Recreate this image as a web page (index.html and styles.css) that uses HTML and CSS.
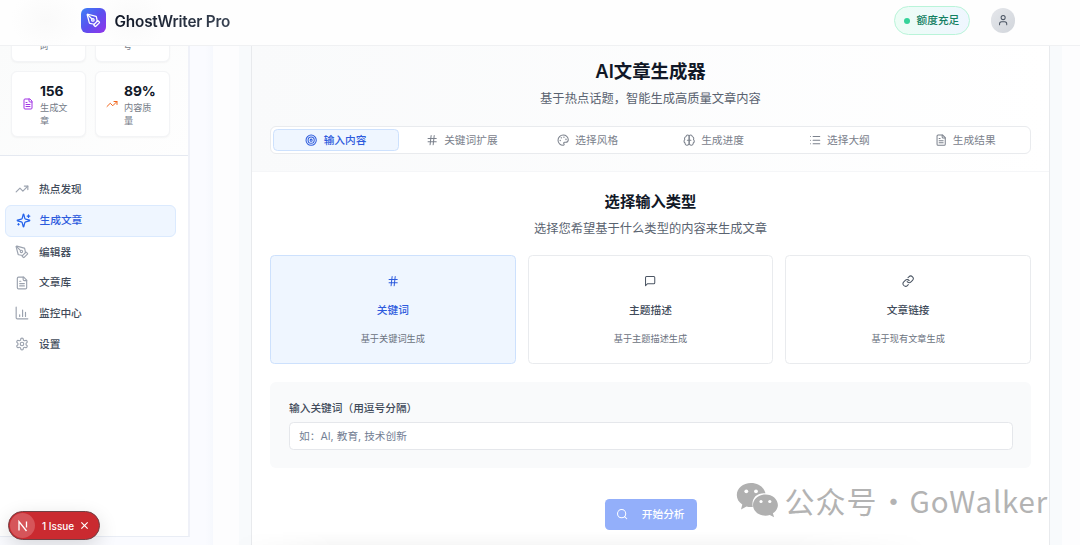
FILE: index.html
```html
<!DOCTYPE html>
<html lang="zh-CN">
<head>
<meta charset="utf-8">
<title>GhostWriter Pro</title>
<link rel="stylesheet" href="styles.css">
</head>
<body>
<svg class="defs" width="0" height="0">
  <symbol id="pen" viewBox="0 0 24 24"><path d="M15.707 21.293a1 1 0 0 1-1.414 0l-1.586-1.586a1 1 0 0 1 0-1.414l5.586-5.586a1 1 0 0 1 1.414 0l1.586 1.586a1 1 0 0 1 0 1.414z"/><path d="m18 13-1.375-6.874a1 1 0 0 0-.746-.776L3.235 2.028a1 1 0 0 0-1.207 1.207L5.35 15.879a1 1 0 0 0 .776.746L13 18"/><path d="m2.3 2.3 7.286 7.286"/><circle cx="11" cy="11" r="2"/></symbol>
  <symbol id="file" viewBox="0 0 24 24"><path d="M15 2H6a2 2 0 0 0-2 2v16a2 2 0 0 0 2 2h12a2 2 0 0 0 2-2V7Z"/><path d="M14 2v4a2 2 0 0 0 2 2h4M10 9H8M16 13H8M16 17H8"/></symbol>
  <symbol id="trend" viewBox="0 0 24 24"><path d="m22 7-8.500 8.500-5-5L2 17"/><path d="M16 7h6v6"/></symbol>
  <symbol id="hash" viewBox="0 0 24 24"><path d="M4 9h16M4 15h16M10 3 8 21M16 3l-2 18"/></symbol>
</svg>
<header class="topbar">
  <div class="brand"><span class="logo"><svg class="icon"><use href="#pen"/></svg></span><span class="brand-name">GhostWriter Pro</span></div>
  <div class="account"><span class="quota"><i class="dot"></i>额度充足</span>
    <span class="avatar"><svg class="icon" viewBox="0 0 24 24"><path d="M19 21v-2a4 4 0 0 0-4-4H9a4 4 0 0 0-4 4v2"/><circle cx="12" cy="7" r="4"/></svg></span></div>
</header>
<div class="layout">
  <aside class="sidebar">
    <section class="stats">
      <div class="stat stat-end"><span class="stat-label">词</span></div>
      <div class="stat stat-end"><span class="stat-label">号</span></div>
      <div class="stat"><svg class="icon purple"><use href="#file"/></svg><div><b>156</b><span class="stat-label">生成文章</span></div></div>
      <div class="stat"><svg class="icon orange"><use href="#trend"/></svg><div><b>89%</b><span class="stat-label">内容质量</span></div></div>
    </section>
    <nav class="nav">
      <a class="nav-item"><svg class="icon"><use href="#trend"/></svg>热点发现</a>
      <a class="nav-item active"><svg class="icon" viewBox="0 0 24 24"><path d="M9.937 15.500A2 2 0 0 0 8.500 14.063l-6.135-1.582a.5.5 0 0 1 0-.962L8.500 9.936A2 2 0 0 0 9.937 8.500l1.582-6.135a.5.5 0 0 1 .963 0L14.063 8.500A2 2 0 0 0 15.500 9.937l6.135 1.581a.5.5 0 0 1 0 .964L15.500 14.063a2 2 0 0 0-1.437 1.437l-1.582 6.135a.5.5 0 0 1-.963 0z"/><path d="M20 3v4M22 5h-4M4 17v2M5 18H3"/></svg>生成文章</a>
      <a class="nav-item"><svg class="icon"><use href="#pen"/></svg>编辑器</a>
      <a class="nav-item"><svg class="icon"><use href="#file"/></svg>文章库</a>
      <a class="nav-item"><svg class="icon" viewBox="0 0 24 24"><path d="M2 2v18a2 2 0 0 0 2 2h18M8 18v-3M13 18V7M18 18v-7"/></svg>监控中心</a>
      <a class="nav-item"><svg class="icon" viewBox="0 0 24 24"><path d="M12.220 2h-.44a2 2 0 0 0-2 2v.18a2 2 0 0 1-1 1.730l-.43.25a2 2 0 0 1-2 0l-.15-.08a2 2 0 0 0-2.730.73l-.22.38a2 2 0 0 0 .73 2.730l.15.1a2 2 0 0 1 1 1.720v.51a2 2 0 0 1-1 1.740l-.15.09a2 2 0 0 0-.73 2.730l.22.38a2 2 0 0 0 2.730.73l.15-.08a2 2 0 0 1 2 0l.43.25a2 2 0 0 1 1 1.730V20a2 2 0 0 0 2 2h.44a2 2 0 0 0 2-2v-.18a2 2 0 0 1 1-1.730l.43-.25a2 2 0 0 1 2 0l.15.08a2 2 0 0 0 2.730-.73l.22-.39a2 2 0 0 0-.73-2.730l-.15-.08a2 2 0 0 1-1-1.740v-.5a2 2 0 0 1 1-1.740l.15-.09a2 2 0 0 0 .73-2.730l-.22-.38a2 2 0 0 0-2.730-.73l-.15.08a2 2 0 0 1-2 0l-.43-.25a2 2 0 0 1-1-1.730V4a2 2 0 0 0-2-2z"/><circle cx="12" cy="12" r="3"/></svg>设置</a>
    </nav>
  </aside>
  <div class="gutter"></div>
  <main class="content">
    <div class="frame">
      <div class="panel">
        <section class="hero">
          <h1>AI文章生成器</h1>
          <p class="lead">基于热点话题，智能生成高质量文章内容</p>
          <div class="tabs">
            <span class="tab active"><svg class="icon" viewBox="0 0 24 24"><circle cx="12" cy="12" r="10"/><circle cx="12" cy="12" r="6"/><circle cx="12" cy="12" r="2"/></svg>输入内容</span>
            <span class="tab"><svg class="icon"><use href="#hash"/></svg>关键词扩展</span>
            <span class="tab"><svg class="icon" viewBox="0 0 24 24"><path d="M12 22a1 1 0 0 1 0-20 10 9 0 0 1 10 9 5 5 0 0 1-5 5h-2.250a1.750 1.750 0 0 0-1.400 2.800l.3.4a1.750 1.750 0 0 1-1.400 2.800z"/><circle cx="13.500" cy="6.500" r=".5"/><circle cx="17.500" cy="10.500" r=".5"/><circle cx="6.500" cy="12.500" r=".5"/><circle cx="8.500" cy="7.500" r=".5"/></svg>选择风格</span>
            <span class="tab"><svg class="icon" viewBox="0 0 24 24"><path d="M12 5a3 3 0 1 0-5.997.125 4 4 0 0 0-2.526 5.770 4 4 0 0 0 .556 6.588A4 4 0 1 0 12 18Z"/><path d="M12 5a3 3 0 1 1 5.997.125 4 4 0 0 1 2.526 5.770 4 4 0 0 1-.556 6.588A4 4 0 1 1 12 18Z"/><path d="M8.500 12h7"/></svg>生成进度</span>
            <span class="tab"><svg class="icon" viewBox="0 0 24 24"><path d="M3 5h.01M3 12h.01M3 19h.01M8 5h13M8 12h13M8 19h13"/></svg>选择大纲</span>
            <span class="tab"><svg class="icon"><use href="#file"/></svg>生成结果</span>
          </div>
        </section>
        <section class="body">
          <h2>选择输入类型</h2>
          <p class="lead">选择您希望基于什么类型的内容来生成文章</p>
          <div class="types">
            <div class="type active"><svg class="icon"><use href="#hash"/></svg><strong>关键词</strong><small>基于关键词生成</small></div>
            <div class="type"><svg class="icon" viewBox="0 0 24 24"><path d="M21 15a2 2 0 0 1-2 2H7l-4 4V5a2 2 0 0 1 2-2h14a2 2 0 0 1 2 2z"/></svg><strong>主题描述</strong><small>基于主题描述生成</small></div>
            <div class="type"><svg class="icon" viewBox="0 0 24 24"><path d="M10 13a5 5 0 0 0 7.540.54l3-3a5 5 0 0 0-7.070-7.070l-1.720 1.710"/><path d="M14 11a5 5 0 0 0-7.540-.54l-3 3a5 5 0 0 0 7.070 7.070l1.710-1.710"/></svg><strong>文章链接</strong><small>基于现有文章生成</small></div>
          </div>
          <div class="form"><label for="kw">输入关键词（用逗号分隔）</label><input id="kw" class="field" placeholder="如：AI, 教育, 技术创新"></div>
          <button class="submit"><svg class="icon" viewBox="0 0 24 24"><circle cx="11" cy="11" r="8"/><path d="m21 21-4.300-4.300"/></svg>开始分析</button>
        </section>
      </div>
    </div>
  </main>
</div>
<div class="bottom-shade"></div>
<div class="issue"><span class="issue-logo"><svg viewBox="0 0 20 20" width="20" height="20"><path d="M6 14.500v-9l7.500 9.500M13.500 5.500v6" fill="none" stroke="#fff" stroke-width="1.300"/></svg></span><span>1 Issue</span><svg class="close" viewBox="0 0 10 10"><path d="m1.500 1.500 7 7m0-7-7 7"/></svg></div>
<div class="watermark">
  <svg class="wechat" viewBox="0 0 42 36"><path d="M15 1C7 1 .8 6.200.8 13c0 4 2 7.200 5.500 9.500L5 27.500l5.500-3c2 .6 4 .7 6.300.5C15 16 21 10.500 29.500 11.300 28 5 22 1 15 1Z"/><path d="M29.500 12.500c-7 0-12.500 4.700-12.500 10.600s5.500 10.600 12.500 10.600c1.500 0 3-.2 4.300-.7l4.300 2.300-1.200-4c3-2 5-5 5-8.200 0-5.900-5.500-10.600-12.400-10.600Z"/><g class="eyes"><circle cx="10.300" cy="9.300" r="1.900"/><circle cx="20" cy="9.300" r="1.900"/><circle cx="25" cy="19.500" r="1.600"/><circle cx="33.800" cy="19.500" r="1.600"/></g></svg>
  <span class="wm-cn">公众号</span><span class="wm-dot">·</span><span class="wm-en">GoWalker</span>
</div>
</body>
</html>
```
FILE: styles.css
```css
* { box-sizing: border-box; }
body { margin: 0; width: 1080px; height: 545px; overflow: hidden; display: flex; flex-direction: column; position: relative; background: #fafbff; color: #414b5a; font: 10.7px/16px Inter, "Noto Sans CJK SC", sans-serif; }
h1, h2, p { margin: 0; }
.defs { position: absolute; }
.icon { width: 12.300px; height: 12.300px; flex: none; fill: none; stroke: currentColor; stroke-width: 2; stroke-linecap: round; stroke-linejoin: round; }

.topbar { height: 46px; flex: none; display: flex; justify-content: space-between; align-items: center; padding: 0 65px 4px 81px; border-bottom: 1px solid #f0f1f3; background: radial-gradient(ellipse 35px 30px at 46px 20px, #fafafa, transparent), radial-gradient(ellipse 35px 30px at 132px 20px, #fafafa, transparent), #fefefe; }
.brand, .account { display: flex; align-items: center; }
.logo { width: 24.500px; height: 24.500px; border-radius: 6px; display: grid; place-items: center; color: #fff; background: linear-gradient(135deg, #3b82f6, #5b50ef 50%, #9333ea); }
.logo .icon { width: 15px; height: 15px; }
.brand-name { margin: 2px 0 0 9px; font-size: 15.300px; letter-spacing: -.17px; font-weight: 600; background: linear-gradient(90deg, #111827, #374151); background-clip: text; color: transparent; }
.quota { height: 29px; width: 76px; display: flex; align-items: center; gap: 7px; padding: 1px 0 0 9px; border: 1px solid #b9f4d9; border-radius: 15px; background: linear-gradient(90deg, #ecfdf5, #eff6ff); color: #138062; font-weight: 500; white-space: nowrap; }
.dot { width: 6px; height: 6px; border-radius: 50%; background: #34d399; }
.avatar { width: 24.500px; height: 24.500px; margin-left: 21px; border-radius: 50%; display: grid; place-items: center; background: linear-gradient(135deg, #e5e7eb, #d1d5db); color: #4b5563; }

.layout { flex: 1; min-height: 0; display: flex; }
.sidebar { width: 190px; height: 491px; flex: none; background: #fff; border-right: 2px solid #eff1f8; border-bottom: 1px solid #e9edf5; }
.stats { height: 110px; overflow: hidden; display: grid; grid-template-columns: 75px 75px; grid-template-rows: 66px 66px; gap: 9px; align-content: end; padding: 0 0 18.500px 11px; border-bottom: 1px solid #e5e9f1; background: linear-gradient(135deg, #fafbfb, #fefefe); }
.stat { display: flex; align-items: center; gap: 6px; padding: 2px 8px 0 10px; border: 1px solid #f3f4f6; border-radius: 6px; background: #fff; box-shadow: 0 1px 2px rgb(0 0 0 / 4%); }
.stat .icon { width: 12px; height: 12px; margin-top: -2px; }
.stat b { display: block; font-size: 13.800px; letter-spacing: -.1px; line-height: 18px; margin-bottom: 2px; color: #111827; }
.stat-label { display: block; width: 29px; font-size: 9.200px; line-height: 12.300px; color: #757c88; }
.stat-end { align-items: flex-end; padding: 0 0 8px 27px; }
.purple { color: #a033e5; }
.orange { color: #f1661c; }
.nav { display: flex; flex-direction: column; padding: 18px 12px 0 5px; }
.nav-item { height: 30.700px; display: flex; align-items: center; gap: 10px; padding: 1px 0 0 10px; font-weight: 500; }
.nav-item .icon { width: 14px; height: 14px; margin-top: -1px; color: #9ca3af; }
.nav-item.active { height: 32px; gap: 9px; padding-left: 9.500px; border: 1px solid #dbeafe; border-radius: 6px; background: #eff6ff; color: #2d5bdd; }
.nav-item.active .icon { width: 15px; height: 15px; color: #2563eb; }
.gutter { width: 23px; background: linear-gradient(90deg, #fafbff 65%, #f6f8fd); }
.content { flex: 1; padding: 0 18px 0 26px; background: #fdfdfe; }
.frame { height: 100%; padding: 0 12px; background: #f8fafc; }
.panel { height: 100%; border: solid #e8eaed; border-width: 0 1px; background: #fff; }
.hero { height: 126px; padding: 13px 18px 0; text-align: center; border-bottom: 1px solid #f5f6f8; background: linear-gradient(90deg, #f9fafb, #fff); }
h1 { font-size: 18.400px; line-height: 24px; font-weight: 600; color: #111827; }
.lead { font-size: 12.270px; line-height: 18px; color: #5a6370; }
.hero .lead { margin-top: 7px; }
.tabs { height: 27.500px; margin-top: 18px; display: grid; grid-template-columns: repeat(6, 1fr); padding: 2px; border: 1px solid #e9ebee; border-radius: 6px; background: #fff; }
.tab { display: flex; align-items: center; justify-content: center; gap: 6px; padding-top: 2px; color: #7b818c; border: 1px solid transparent; border-radius: 4.500px; }
.tab .icon { margin-top: -2px; }
.tab.active { border-color: #cde1fd; background: #eff6ff; color: #2d5bdd; font-weight: 500; }
.body { padding: 19px 18px 0; text-align: center; display: flex; flex-direction: column; }
h2 { font-size: 15.300px; line-height: 22px; font-weight: 600; color: #111827; }
.body .lead { margin-top: 7px; }
.types { display: grid; grid-template-columns: repeat(3, 1fr); gap: 12px; margin-top: 17px; }
.type { height: 109px; display: flex; flex-direction: column; align-items: center; padding-top: 18.700px; border: 1px solid #e9ebee; border-radius: 4.500px; }
.type .icon { color: #4b5563; }
.type strong { margin-top: 16px; font-weight: 500; line-height: 16px; }
.type small { margin-top: 13px; font-size: 9.200px; line-height: 14px; color: #6b7280; }
.type.active { background: #eff6ff; border-color: #cde1fd; }
.type.active .icon, .type.active strong { color: #2d5bdd; }
.form { height: 86px; margin-top: 18px; padding: 19px 18px 0 19px; display: flex; flex-direction: column; gap: 5px; border-radius: 6px; background: #f9fafb; text-align: left; }
.form label { font-weight: 500; }
.field { height: 28px; padding: 1px 9px 0; border: 1px solid #e5e7eb; border-radius: 4.500px; background: #fff; font: inherit; }
.field::placeholder { color: #748094; opacity: 1; }
.submit { align-self: center; width: 92px; height: 31px; margin-top: 31px; padding: 0; display: flex; align-items: center; justify-content: center; gap: 13px; border: 0; border-radius: 4.500px; background: #93affa; color: #fff; font: inherit; font-weight: 500; }

.bottom-shade { position: absolute; left: 230px; right: 150px; bottom: 0; height: 14px; background: linear-gradient(transparent, rgb(0 0 0 / 3%)); mask-image: linear-gradient(90deg, transparent, #000 15%, #000 80%, transparent); }
.issue { position: absolute; left: 8px; top: 511px; width: 92px; height: 29px; display: flex; align-items: center; padding-left: 1px; border: 1px solid #704145; border-radius: 15px; background: #ca2a30; color: #fff; font-size: 10px; font-weight: 500; box-shadow: 0 6px 20px rgb(0 0 0 / 14%); white-space: nowrap; }
.issue-logo { width: 25px; height: 25px; margin-right: 7px; display: grid; place-items: center; border-radius: 50%; background: #d6555a; }
.close { width: 9px; height: 9px; margin-left: 6px; fill: none; stroke: #fff; stroke-width: 1.300; }
.watermark { position: absolute; left: 735.500px; top: 478px; height: 44px; display: flex; align-items: center; color: #b3b3b3; font: 400 30px/44px "Noto Sans CJK SC", sans-serif; white-space: nowrap; }
.wechat { width: 42px; height: 36px; margin: -1px 7px 0 0; fill: #b0b0b0; }
.eyes { fill: #fff; }
.wm-cn { letter-spacing: 1px; }
.wm-dot { width: 32px; text-align: center; }
.wm-en { font-size: 29.500px; letter-spacing: .8px; }
```
